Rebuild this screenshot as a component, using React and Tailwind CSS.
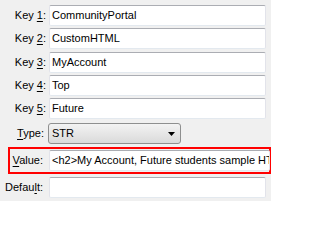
import React from "react";

const font = { fontFamily: '"Liberation Sans", Arial, sans-serif' };

function Label({ pre, u, post, className }) {
  return (
    <span className={"text-[11px] leading-none text-black whitespace-nowrap " + className}>
      {pre}
      <span className="underline underline-offset-[2px]">{u}</span>
      {post}
    </span>
  );
}

function Input({ value, className = "" }) {
  return (
    <div
      className={
        "h-[21px] bg-white border border-[#e2e3ea] border-t-[#abadb3] border-b-[#e3e9ef] rounded-[2px] flex items-center pl-[2px] overflow-hidden text-[11px] text-black whitespace-nowrap " +
        className
      }
    >
      {value}
    </div>
  );
}

function KeyRow({ n, value, mt }) {
  return (
    <div className={"flex items-center " + mt}>
      <div className="w-[49px] flex justify-end pr-[3px]">
        <Label pre="Key " u={String(n)} post=":" />
      </div>
      <Input value={value} className="w-[217px]" />
    </div>
  );
}

export default function App() {
  return (
    <div
      className="w-[271px] h-[201px] bg-[#f0f0f0] overflow-hidden pt-[5px]"
      style={font}
    >
      <KeyRow n={1} value="CommunityPortal" mt="" />
      <KeyRow n={2} value="CustomHTML" mt="mt-[2px]" />
      <KeyRow n={3} value="MyAccount" mt="mt-[3px]" />
      <KeyRow n={4} value="Top" mt="mt-[2px]" />
      <KeyRow n={5} value="Future" mt="mt-[2px]" />

      <div className="flex items-center mt-[4px]">
        <div className="w-[48px] flex justify-end pr-[4px]">
          <Label pre="" u="T" post="ype:" />
        </div>
        <div className="w-[133px] h-[21px] rounded-[3px] border border-[#8e8f8f] bg-gradient-to-b from-[#f3f3f3] to-[#dadada] flex items-center pl-[3px] pr-[5px] text-[11px] text-black">
          <span className="flex-1">STR</span>
          <svg width="7" height="4" viewBox="0 0 7 4">
            <polygon points="0,0 7,0 3.5,4" fill="#000" />
          </svg>
        </div>
      </div>

      <div className="ml-[8px] mt-[3px] w-[263px] h-[27px] border-2 border-[#ff0000] flex items-center">
        <div className="w-[39px] flex justify-end pr-[6px]">
          <Label pre="" u="V" post="alue:" />
        </div>
        <Input
          value="<h2>My Account, Future students sample HTML</h2>"
          className="flex-1 -mr-[1px]"
        />
      </div>

      <div className="flex items-center mt-[3px]">
        <div className="w-[49px] flex justify-end pr-[6px]">
          <Label pre="Defau" u="l" post="t:" />
        </div>
        <Input value="" className="w-[217px]" />
      </div>
    </div>
  );
}
